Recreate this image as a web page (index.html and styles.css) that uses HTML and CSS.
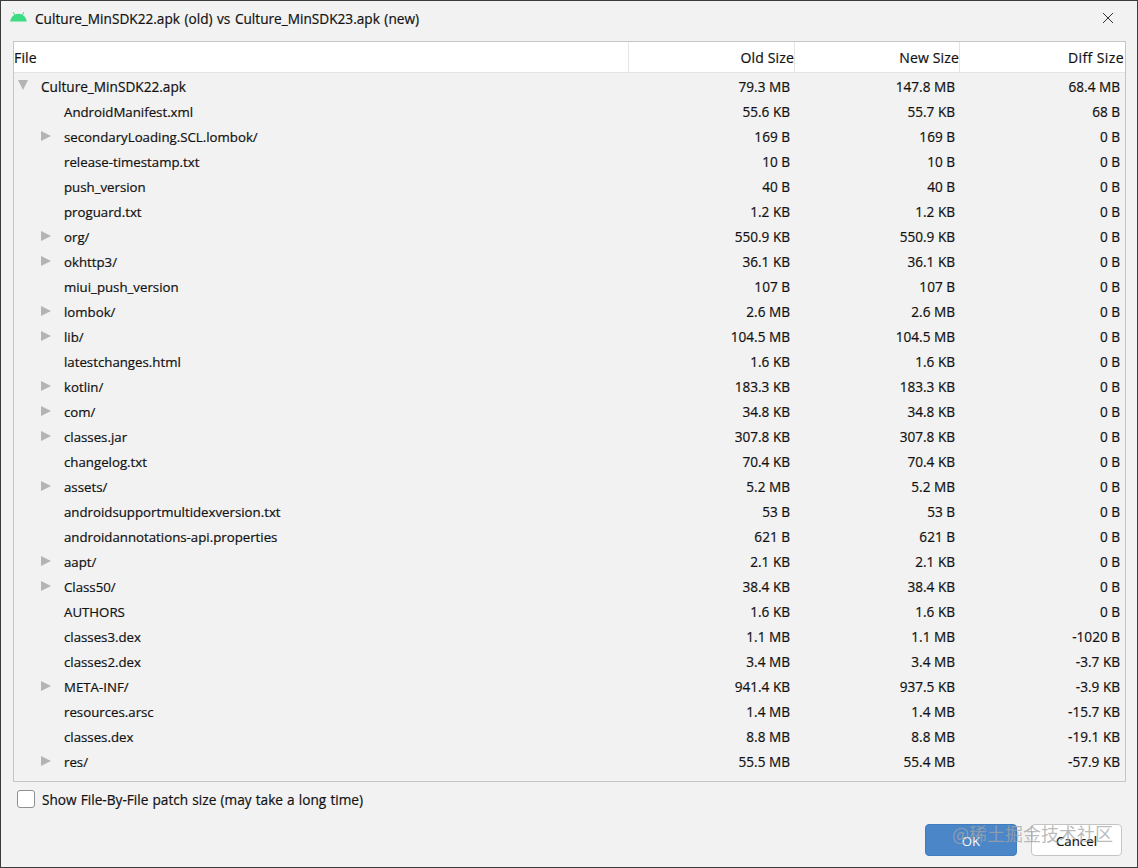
FILE: index.html
```html
<!DOCTYPE html>
<html lang="en">
<head>
<meta charset="utf-8">
<title>APK diff</title>
<link rel="stylesheet" href="styles.css">
</head>
<body>
<div class="dialog">
  <div class="titlebar">
    <svg class="logo" width="17" height="11" viewBox="0 0 17 11"><path fill="#3ddc84" d="M0.2 10.5C0.5 7.6 2 5.3 4.2 4L2.8 1.5a.4.4 0 0 1 .7-.4L5 3.5C6.1 3 7.2 2.8 8.5 2.8s2.4.2 3.5.7l1.5-2.4a.4.4 0 0 1 .7.4L12.800 4c2.200 1.300 3.700 3.600 4 6.500z"/></svg>
    <span class="title">Culture_MinSDK22.apk (old) vs Culture_MinSDK23.apk (new)</span>
    <svg class="close" width="12" height="12" viewBox="0 0 12 12"><path d="M1 1l10 10M11 1L1 11" stroke="#333" stroke-width="1" fill="none"/></svg>
  </div>
  <div class="table">
    <div class="head">
      <div class="hname">File</div>
      <div class="hcol">Old Size</div>
      <div class="hcol">New Size</div>
      <div class="hcol hlast">Diff Size</div>
    </div>
    <div class="rows">
      <div class="row"><span class="arrow down"></span><span class="name root">Culture_MinSDK22.apk</span><span class="val">79.3 MB</span><span class="val">147.8 MB</span><span class="val">68.4 MB</span></div>
      <div class="row"><span class="name">AndroidManifest.xml</span><span class="val">55.6 KB</span><span class="val">55.7 KB</span><span class="val">68 B</span></div>
      <div class="row"><span class="arrow"></span><span class="name">secondaryLoading.SCL.lombok/</span><span class="val">169 B</span><span class="val">169 B</span><span class="val">0 B</span></div>
      <div class="row"><span class="name">release-timestamp.txt</span><span class="val">10 B</span><span class="val">10 B</span><span class="val">0 B</span></div>
      <div class="row"><span class="name">push_version</span><span class="val">40 B</span><span class="val">40 B</span><span class="val">0 B</span></div>
      <div class="row"><span class="name">proguard.txt</span><span class="val">1.2 KB</span><span class="val">1.2 KB</span><span class="val">0 B</span></div>
      <div class="row"><span class="arrow"></span><span class="name">org/</span><span class="val">550.9 KB</span><span class="val">550.9 KB</span><span class="val">0 B</span></div>
      <div class="row"><span class="arrow"></span><span class="name">okhttp3/</span><span class="val">36.1 KB</span><span class="val">36.1 KB</span><span class="val">0 B</span></div>
      <div class="row"><span class="name">miui_push_version</span><span class="val">107 B</span><span class="val">107 B</span><span class="val">0 B</span></div>
      <div class="row"><span class="arrow"></span><span class="name">lombok/</span><span class="val">2.6 MB</span><span class="val">2.6 MB</span><span class="val">0 B</span></div>
      <div class="row"><span class="arrow"></span><span class="name">lib/</span><span class="val">104.5 MB</span><span class="val">104.5 MB</span><span class="val">0 B</span></div>
      <div class="row"><span class="name">latestchanges.html</span><span class="val">1.6 KB</span><span class="val">1.6 KB</span><span class="val">0 B</span></div>
      <div class="row"><span class="arrow"></span><span class="name">kotlin/</span><span class="val">183.3 KB</span><span class="val">183.3 KB</span><span class="val">0 B</span></div>
      <div class="row"><span class="arrow"></span><span class="name">com/</span><span class="val">34.8 KB</span><span class="val">34.8 KB</span><span class="val">0 B</span></div>
      <div class="row"><span class="arrow"></span><span class="name">classes.jar</span><span class="val">307.8 KB</span><span class="val">307.8 KB</span><span class="val">0 B</span></div>
      <div class="row"><span class="name">changelog.txt</span><span class="val">70.4 KB</span><span class="val">70.4 KB</span><span class="val">0 B</span></div>
      <div class="row"><span class="arrow"></span><span class="name">assets/</span><span class="val">5.2 MB</span><span class="val">5.2 MB</span><span class="val">0 B</span></div>
      <div class="row"><span class="name">androidsupportmultidexversion.txt</span><span class="val">53 B</span><span class="val">53 B</span><span class="val">0 B</span></div>
      <div class="row"><span class="name">androidannotations-api.properties</span><span class="val">621 B</span><span class="val">621 B</span><span class="val">0 B</span></div>
      <div class="row"><span class="arrow"></span><span class="name">aapt/</span><span class="val">2.1 KB</span><span class="val">2.1 KB</span><span class="val">0 B</span></div>
      <div class="row"><span class="arrow"></span><span class="name">Class50/</span><span class="val">38.4 KB</span><span class="val">38.4 KB</span><span class="val">0 B</span></div>
      <div class="row"><span class="name">AUTHORS</span><span class="val">1.6 KB</span><span class="val">1.6 KB</span><span class="val">0 B</span></div>
      <div class="row"><span class="name">classes3.dex</span><span class="val">1.1 MB</span><span class="val">1.1 MB</span><span class="val">-1020 B</span></div>
      <div class="row"><span class="name">classes2.dex</span><span class="val">3.4 MB</span><span class="val">3.4 MB</span><span class="val">-3.7 KB</span></div>
      <div class="row"><span class="arrow"></span><span class="name">META-INF/</span><span class="val">941.4 KB</span><span class="val">937.5 KB</span><span class="val">-3.9 KB</span></div>
      <div class="row"><span class="name">resources.arsc</span><span class="val">1.4 MB</span><span class="val">1.4 MB</span><span class="val">-15.7 KB</span></div>
      <div class="row"><span class="name">classes.dex</span><span class="val">8.8 MB</span><span class="val">8.8 MB</span><span class="val">-19.1 KB</span></div>
      <div class="row"><span class="arrow"></span><span class="name">res/</span><span class="val">55.5 MB</span><span class="val">55.4 MB</span><span class="val">-57.9 KB</span></div>
    </div>
  </div>
  <label class="option"><span class="check"></span><span>Show File-By-File patch size (may take a long time)</span></label>
  <div class="buttons">
    <div class="btn primary">OK</div>
    <div class="btn">Cancel</div>
    <div class="watermark">@稀土掘金技术社区</div>
  </div>
</div>
</body>
</html>
```
FILE: styles.css
```css
* { box-sizing: border-box; }
html, body { margin: 0; padding: 0; }
body { width: 1138px; height: 868px; overflow: hidden; }
.dialog {
  width: 1138px; height: 868px;
  background: #f2f2f2;
  border: 1px solid #3c3c3c;
  font-family: "Open Sans", "Noto Sans", sans-serif;
  font-size: 13.25px;
  color: #111;
  display: flex; flex-direction: column;
  -webkit-text-stroke: 0.2px #111;
}
.titlebar { height: 40px; display: flex; align-items: center; padding: 0 23px 6px 9px; flex: none; }
.logo { margin-right: 8px; margin-top: -3px; }
.title { flex: 1; font-size: 13.65px; word-spacing: 1px; }
.table {
  margin-left: 12px; width: 1113px; height: 741px;
  border: 1px solid #c6c6c6; flex: none;
  display: flex; flex-direction: column;
}
.head { height: 31px; background: #fff; display: flex; flex: none; border-bottom: 1px solid #e4e4e4; line-height: 32px; font-size: 14px; letter-spacing: .15px; }
.hname { width: 615px; border-right: 1px solid #e4e4e4; }
.hcol { width: 166px; text-align: right; border-right: 1px solid #e4e4e4; padding-right: 0; white-space: nowrap; }
.hcol + .hcol { width: 165px; }
.hlast { border-right: 0; width: 165px; padding-right: 1px; letter-spacing: .4px; }
.rows { padding-top: 1px; }
.row { height: 25px; display: flex; align-items: center; padding-left: 50px; position: relative; }
.arrow {
  position: absolute; left: 27px; top: 7px;
  width: 0; height: 0;
  border-left: 10px solid #b4b4b4;
  border-top: 5.500px solid transparent;
  border-bottom: 5.500px solid transparent;
}
.arrow.down {
  left: 4px; top: 6px;
  border-top: 10px solid #b4b4b4; border-bottom: 0;
  border-left: 5.500px solid transparent; border-right: 5.500px solid transparent;
}
.name { flex: 1; white-space: nowrap; }
.root { margin-left: -23px; font-size: 13.65px; }
.val { width: 165px; text-align: right; padding-right: 5px; white-space: nowrap; font-size: 13.6px; }
.option { display: flex; align-items: center; gap: 7px; margin: 6px 0 0 16px; height: 22px; flex: none; font-size: 13.65px; word-spacing: .6px; }
.check { width: 18px; height: 18px; background: #fff; border: 1px solid #8f8f8f; border-radius: 3px; }
.buttons { position: relative; display: flex; justify-content: flex-end; gap: 14px; padding-right: 15px; margin-top: 14px; }
.btn {
  width: 91px; height: 32px; border: 1px solid #c4c4c4; border-radius: 4px;
  background: #fff; text-align: center; line-height: 32px;
}
.primary { background: #4a86c8; border-color: #3f7cc0; color: #fff; width: 92px; -webkit-text-stroke: 0; }
.watermark {
  position: absolute; left: 951px; top: -4px;
  font-family: "Noto Sans CJK SC", sans-serif; font-size: 18px;
  color: rgba(165,165,165,.75); white-space: nowrap; -webkit-text-stroke: 0;
}
```
